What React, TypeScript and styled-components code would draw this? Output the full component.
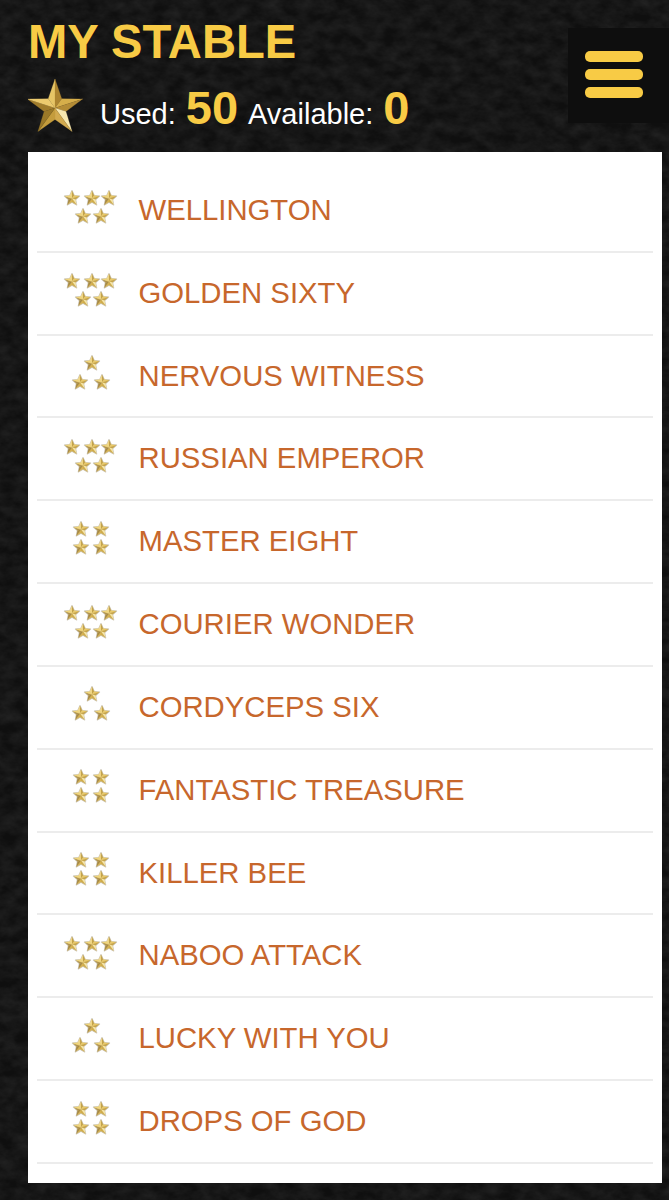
import React from "react";
import styled, { createGlobalStyle } from "styled-components";

const noise = `url("data:image/svg+xml,${encodeURIComponent(
  `<svg xmlns='http://www.w3.org/2000/svg' width='669' height='1200'><filter id='n' x='0' y='0' width='100%' height='100%'><feTurbulence type='fractalNoise' baseFrequency='0.06 0.09' numOctaves='4' seed='7'/><feColorMatrix values='0 0 0 0 1  0 0 0 0 1  0 0 0 0 1  0.12 0 0 0 -0.03'/></filter><rect width='669' height='1200' filter='url(#n)'/></svg>`
)}")`;

const GlobalStyle = createGlobalStyle`
  html, body { margin: 0; padding: 0; }
  body {
    background-color: #0f0f0f;
    background-image: ${noise};
    font-family: "Liberation Sans", Arial, sans-serif;
  }
`;

const Page = styled.div`
  width: 669px;
  height: 1200px;
  overflow: hidden;
  display: flex;
  flex-direction: column;
`;

const Header = styled.header`
  height: 152px;
  display: flex;
  justify-content: space-between;
  padding-left: 28px;
  box-sizing: border-box;
`;

const HeaderText = styled.div`
  display: flex;
  flex-direction: column;
`;

const Title = styled.h1`
  margin: 17px 0 0 0;
  font-size: 47.2px;
  line-height: 50px;
  font-weight: 700;
  color: #f8cb45;
  letter-spacing: 0;
`;

const Stats = styled.div`
  display: flex;
  align-items: flex-end;
  margin-top: 11px;
`;

const BigStarIcon = styled.svg`
  width: 56px;
  height: 54px;
  flex: none;
`;

const StatLine = styled.div`
  display: flex;
  align-items: baseline;
  margin-left: 16px;
  height: 48px;
  color: #fff;
  font-size: 29px;
  line-height: 48px;
`;

const StatValue = styled.span`
  color: #f8cb45;
  font-size: 47px;
  font-weight: 700;
  margin: 0 10px 0 10px;
`;

const MenuButton = styled.button`
  margin-top: 28px;
  width: 101px;
  height: 95px;
  border: 0;
  padding: 23px 26px 0 17px;
  background: #0e0e0e;
  display: flex;
  flex-direction: column;
  gap: 7px;
  box-sizing: border-box;
`;

const MenuBar = styled.span`
  display: block;
  width: 58px;
  height: 11px;
  border-radius: 5px;
  background: #f8cb45;
`;

const Panel = styled.main`
  width: 634px;
  height: 1031px;
  margin-left: 28px;
  background: #fff;
  padding: 18px 9px 0;
  box-sizing: border-box;
`;

const List = styled.ul`
  list-style: none;
  margin: 0;
  padding: 0;
`;

const Row = styled.li`
  height: 82.84px;
  box-sizing: border-box;
  border-bottom: 2px solid #ececec;
  display: flex;
  align-items: center;
  padding-left: 25px;
  gap: 16.5px;
`;

const StarCluster = styled.svg`
  width: 60px;
  height: 44px;
  flex: none;
  filter: blur(0.3px);
`;

const HorseName = styled.span`
  color: #c7672c;
  font-size: 29.3px;
  line-height: 34px;
  margin-bottom: 1px;
  white-space: nowrap;
`;

type Pt = [number, number];

const points = (cx: number, cy: number, R: number, r: number): { outer: Pt[]; inner: Pt[] } => {
  const outer: Pt[] = [];
  const inner: Pt[] = [];
  for (let i = 0; i < 5; i++) {
    const a = (-90 + i * 72) * (Math.PI / 180);
    const b = (-54 + i * 72) * (Math.PI / 180);
    outer.push([cx + R * Math.cos(a), cy + R * Math.sin(a)]);
    inner.push([cx + r * Math.cos(b), cy + r * Math.sin(b)]);
  }
  return { outer, inner };
};

const bigPalette = [
  ["#e6c566", "#ac8430"],
  ["#d6ae4a", "#b48c36"],
  ["#f7e8b0", "#d2aa4e"],
  ["#c49c3c", "#9a7828"],
  ["#a07c2c", "#ecca6e"],
];

const smallPalette = [
  ["#f4dc8c", "#c4a24a"],
  ["#ecca66", "#c6a448"],
  ["#f8e8a6", "#d0ac4c"],
  ["#d8b452", "#a88a40"],
  ["#b2944c", "#f2d678"],
];

const Facets: React.FC<{ cx: number; cy: number; R: number; r: number; palette: string[][] }> = ({
  cx,
  cy,
  R,
  r,
  palette,
}) => {
  const { outer, inner } = points(cx, cy, R, r);
  return (
    <>
      {outer.map((p, i) => {
        const next = inner[i];
        const prev = inner[(i + 4) % 5];
        return (
          <React.Fragment key={i}>
            <polygon points={`${cx},${cy} ${prev.join(",")} ${p.join(",")}`} fill={palette[i][0]} stroke={palette[i][0]} strokeWidth="0.2" />
            <polygon points={`${cx},${cy} ${p.join(",")} ${next.join(",")}`} fill={palette[i][1]} stroke={palette[i][1]} strokeWidth="0.2" />
          </React.Fragment>
        );
      })}
    </>
  );
};

const SmallStar: React.FC<{ x: number; y: number }> = ({ x, y }) => {
  const { outer, inner } = points(x, y, 8, 3.8);
  const outline = outer.flatMap((p, i) => [p.join(","), inner[i].join(",")]).join(" ");
  return (
    <g>
      <polygon points={outline} fill="#9a8e72" stroke="#9a8e72" strokeWidth="1.1" strokeLinejoin="round" opacity="0.5" />
      <Facets cx={x} cy={y} R={7.5} r={3.6} palette={smallPalette} />
    </g>
  );
};

const layouts: Record<number, Pt[]> = {
  5: [[10, 10.5], [30, 10.5], [47, 10.5], [21, 28.5], [39, 28.5]],
  4: [[19, 9.5], [39, 9.5], [19, 27.5], [39, 27.5]],
  3: [[30, 9.5], [18, 28.5], [40, 28.5]],
};

const Stars: React.FC<{ count: number }> = ({ count }) => (
  <StarCluster viewBox="0 0 60 44" aria-label={`${count} stars`}>
    {layouts[count].map(([x, y], i) => (
      <SmallStar key={i} x={x} y={y} />
    ))}
  </StarCluster>
);

const horses: { name: string; stars: number }[] = [
  { name: "WELLINGTON", stars: 5 },
  { name: "GOLDEN SIXTY", stars: 5 },
  { name: "NERVOUS WITNESS", stars: 3 },
  { name: "RUSSIAN EMPEROR", stars: 5 },
  { name: "MASTER EIGHT", stars: 4 },
  { name: "COURIER WONDER", stars: 5 },
  { name: "CORDYCEPS SIX", stars: 3 },
  { name: "FANTASTIC TREASURE", stars: 4 },
  { name: "KILLER BEE", stars: 4 },
  { name: "NABOO ATTACK", stars: 5 },
  { name: "LUCKY WITH YOU", stars: 3 },
  { name: "DROPS OF GOD", stars: 4 },
];

export default function App() {
  return (
    <Page>
      <GlobalStyle />
      <Header>
        <HeaderText>
          <Title>MY STABLE</Title>
          <Stats>
            <BigStarIcon viewBox="0 0 56 54">
              <Facets cx={27} cy={30} R={29} r={11.5} palette={bigPalette} />
            </BigStarIcon>
            <StatLine>
              Used:
              <StatValue>50</StatValue>
              Available:
              <StatValue>0</StatValue>
            </StatLine>
          </Stats>
        </HeaderText>
        <MenuButton aria-label="Menu">
          <MenuBar />
          <MenuBar />
          <MenuBar />
        </MenuButton>
      </Header>
      <Panel>
        <List>
          {horses.map((h) => (
            <Row key={h.name}>
              <Stars count={h.stars} />
              <HorseName>{h.name}</HorseName>
            </Row>
          ))}
        </List>
      </Panel>
    </Page>
  );
}
